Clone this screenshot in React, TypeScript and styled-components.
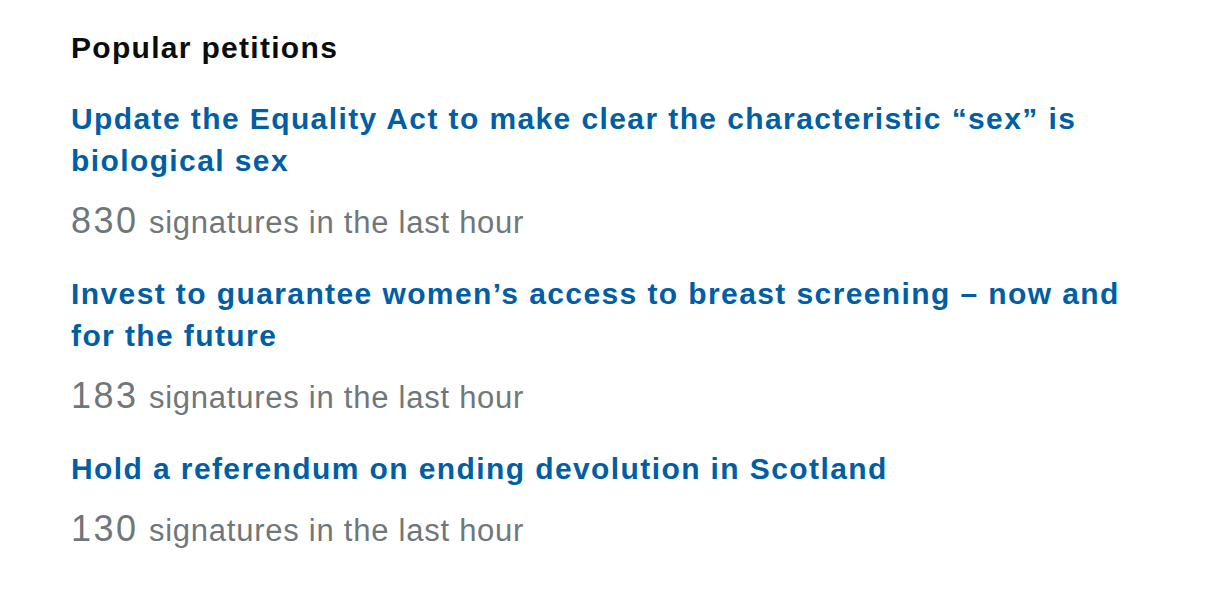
import React from "react";
import styled, { createGlobalStyle } from "styled-components";

const GlobalStyle = createGlobalStyle`
  html, body {
    margin: 0;
    padding: 0;
    background: #ffffff;
  }
  body {
    font-family: "Liberation Sans", Arial, sans-serif;
  }
`;

const Section = styled.section`
  box-sizing: border-box;
  width: 1224px;
  height: 600px;
  padding: 32px 0 0 71px;
  background: #ffffff;
`;

const Heading = styled.h2`
  margin: 0;
  width: 1090px;
  font-family: "Liberation Sans", Arial, sans-serif;
  font-weight: 700;
  font-size: 30px;
  line-height: 32px;
  letter-spacing: 1.3px;
  color: #0b0c0c;
`;

const List = styled.ol`
  list-style: none;
  margin: 34px 0 0 0;
  padding: 0;
  width: 1090px;
  display: flex;
  flex-direction: column;
  gap: 28px;
`;

const Item = styled.li`
  margin: 0;
  padding: 0;
  display: flex;
  flex-direction: column;
  gap: 17px;
`;

const PetitionLink = styled.a`
  display: block;
  font-family: "Liberation Sans", Arial, sans-serif;
  font-weight: 700;
  font-size: 30px;
  line-height: 42px;
  letter-spacing: 1.4px;
  color: #005ea5;
  text-decoration: none;
`;

const Count = styled.p`
  margin: 0;
  font-family: "Liberation Sans", Arial, sans-serif;
  font-weight: 400;
  font-size: 31px;
  line-height: 44px;
  letter-spacing: 0.75px;
  color: #6f777b;
`;

const Number = styled.span`
  font-size: 36px;
  letter-spacing: 2.5px;
  margin-right: 1px;
`;

const petitions = [
  {
    title: "Update the Equality Act to make clear the characteristic “sex” is biological sex",
    count: 830,
  },
  {
    title: "Invest to guarantee women’s access to breast screening – now and for the future",
    count: 183,
  },
  {
    title: "Hold a referendum on ending devolution in Scotland",
    count: 130,
  },
];

export default function App() {
  return (
    <>
      <GlobalStyle />
      <Section>
        <Heading>Popular petitions</Heading>
        <List>
          {petitions.map((p) => (
            <Item key={p.title}>
              <PetitionLink href="#">{p.title}</PetitionLink>
              <Count>
                <Number>{p.count}</Number> signatures in the last hour
              </Count>
            </Item>
          ))}
        </List>
      </Section>
    </>
  );
}
